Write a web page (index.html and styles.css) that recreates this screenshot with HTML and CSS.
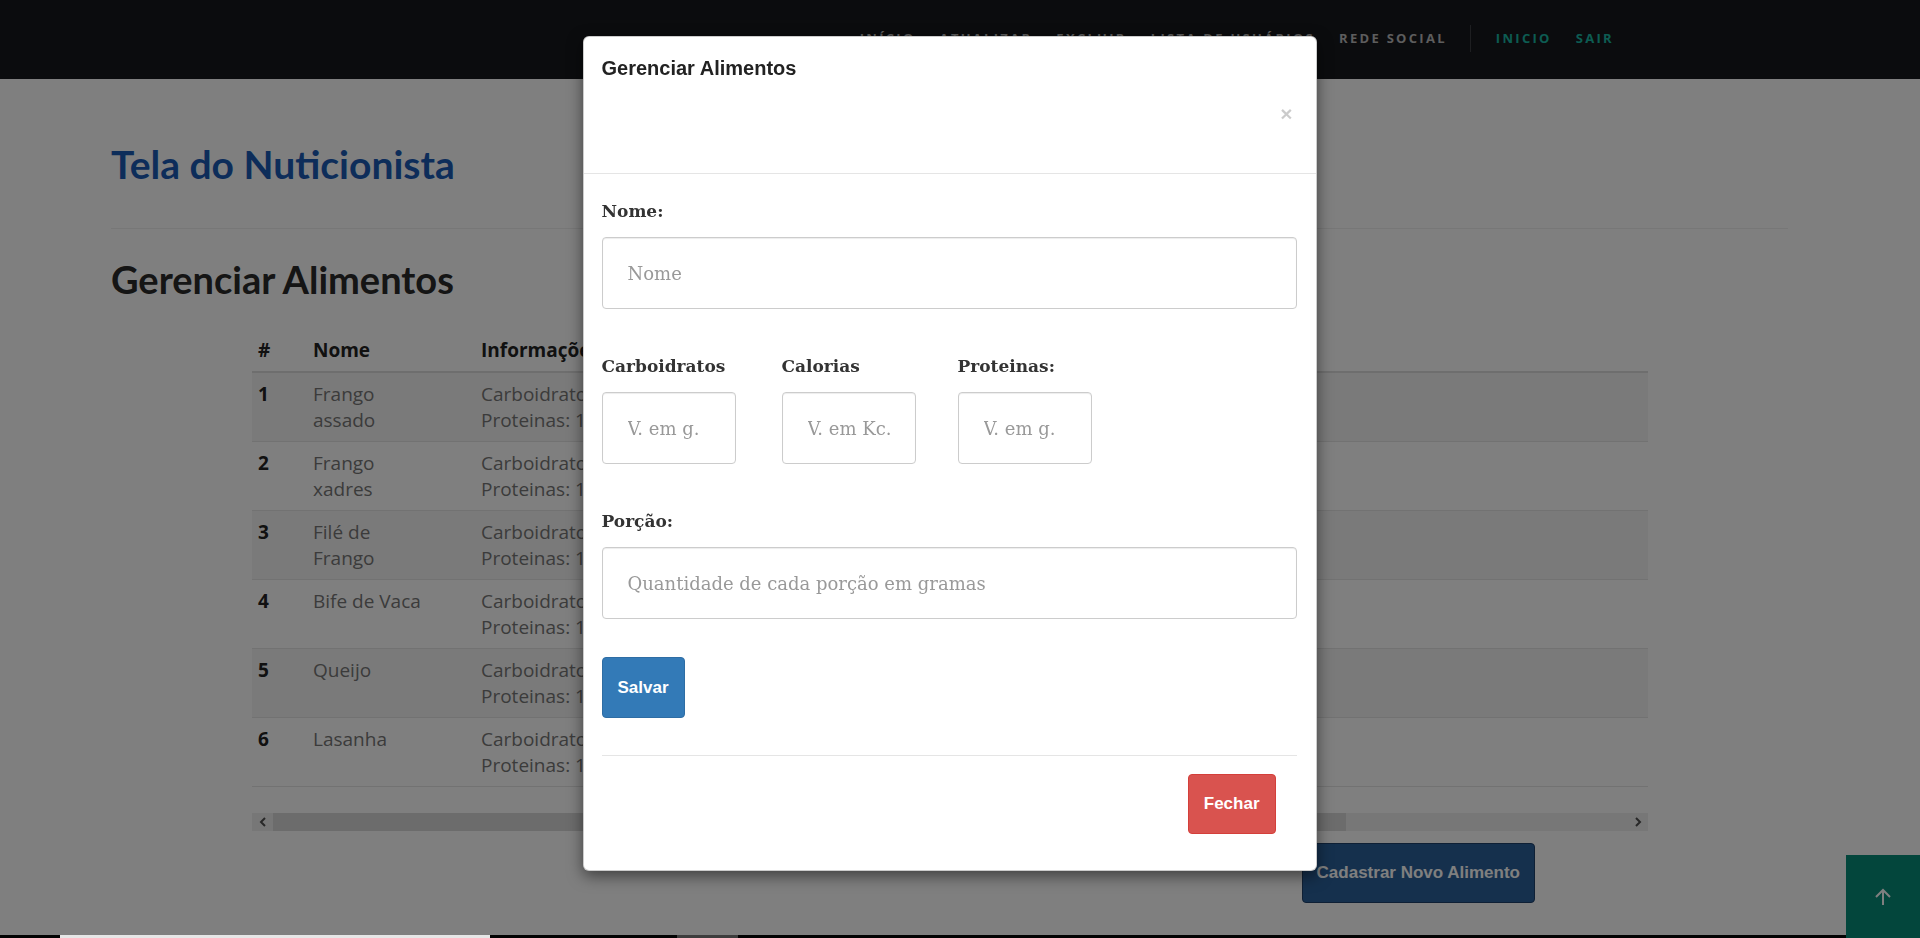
FILE: index.html
```html
<!DOCTYPE html>
<html lang="pt-BR">
<head>
<meta charset="utf-8">
<title>Tela do Nuticionista</title>
<link rel="stylesheet" href="styles.css">
</head>
<body>
<header class="navbar">
  <nav class="nav-links">
    <a class="nav-link">Início</a>
    <a class="nav-link">Atualizar</a>
    <a class="nav-link">Excluir</a>
    <a class="nav-link">Lista de Usuários</a>
    <a class="nav-link">Rede Social</a>
    <span class="nav-sep"></span>
    <a class="nav-link nav-link-accent">Inicio</a>
    <a class="nav-link nav-link-accent">Sair</a>
  </nav>
</header>

<main class="container">
  <h1 class="page-title">Tela do Nuticionista</h1>
  <hr class="page-rule">
  <h2 class="section-title">Gerenciar Alimentos</h2>

  <div class="table-area">
    <div class="table-wrap">
      <table class="food-table">
        <colgroup><col class="col-num"><col class="col-name"><col class="col-info"></colgroup>
        <thead>
          <tr><th>#</th><th>Nome</th><th>Informações Nutricionais</th></tr>
        </thead>
        <tbody>
          <tr><th class="row-num">1</th><td class="name">Frango assado</td><td class="info">Carboidratos: 0g, Calorias: 165Kc, Porção: 100g<br>Proteinas: 19g</td></tr>
          <tr><th class="row-num">2</th><td class="name">Frango xadres</td><td class="info">Carboidratos: 8g, Calorias: 190Kc, Porção: 100g<br>Proteinas: 17g</td></tr>
          <tr><th class="row-num">3</th><td class="name">Filé de Frango</td><td class="info">Carboidratos: 0g, Calorias: 159Kc, Porção: 100g<br>Proteinas: 14g</td></tr>
          <tr><th class="row-num">4</th><td class="name">Bife de Vaca</td><td class="info">Carboidratos: 0g, Calorias: 250Kc, Porção: 100g<br>Proteinas: 16g</td></tr>
          <tr><th class="row-num">5</th><td class="name">Queijo</td><td class="info">Carboidratos: 1g, Calorias: 350Kc, Porção: 100g<br>Proteinas: 12g</td></tr>
          <tr><th class="row-num">6</th><td class="name">Lasanha</td><td class="info">Carboidratos: 15g, Calorias: 135Kc, Porção: 100g<br>Proteinas: 1g</td></tr>
        </tbody>
      </table>
    </div>
    <div class="fake-scroll">
      <span class="scroll-btn"><svg width="8" height="10" viewBox="0 0 8 10"><polyline points="6,1 2,5 6,9" fill="none" stroke="#505050" stroke-width="2"/></svg></span>
      <span class="scroll-thumb"></span>
      <span class="scroll-track"></span>
      <span class="scroll-btn"><svg width="8" height="10" viewBox="0 0 8 10"><polyline points="2,1 6,5 2,9" fill="none" stroke="#505050" stroke-width="2"/></svg></span>
    </div>
  </div>

  <div class="actions">
    <button class="btn btn-navy" type="button">Cadastrar Novo Alimento</button>
  </div>
</main>

<footer class="site-footer">
  <div class="footer-strip">
    <span class="footer-light"></span>
    <span class="footer-gray"></span>
  </div>
</footer>

<a class="to-top" href="#">
  <svg width="18" height="18" viewBox="0 0 18 18"><path d="M9 17V2M2 9l7-7 7 7" fill="none" stroke="#fff" stroke-width="2"/></svg>
</a>

<div class="backdrop"></div>

<div class="modal">
  <div class="modal-dialog">
    <div class="modal-header">
      <h4 class="modal-title">Gerenciar Alimentos</h4>
      <button class="close" type="button">×</button>
    </div>
    <div class="modal-body">
      <div class="form-group">
        <label class="form-label">Nome:</label>
        <input class="form-control" type="text" placeholder="Nome">
      </div>
      <div class="form-group macro-row">
        <div class="macro">
          <label class="form-label">Carboidratos</label>
          <input class="form-control form-control-sm" type="text" placeholder="V. em g.">
        </div>
        <div class="macro">
          <label class="form-label">Calorias</label>
          <input class="form-control form-control-sm" type="text" placeholder="V. em Kc.">
        </div>
        <div class="macro">
          <label class="form-label">Proteinas:</label>
          <input class="form-control form-control-sm" type="text" placeholder="V. em g.">
        </div>
      </div>
      <div class="form-group form-group-last">
        <label class="form-label">Porção:</label>
        <input class="form-control" type="text" placeholder="Quantidade de cada porção em gramas">
      </div>
      <button class="btn btn-blue" type="button">Salvar</button>
      <hr class="modal-sep">
      <div class="modal-footer">
        <button class="btn btn-red" type="button">Fechar</button>
      </div>
    </div>
  </div>
</div>
</body>
</html>
```
FILE: styles.css
```css
* { box-sizing: border-box; }

html, body { margin: 0; }

body {
  padding-right: 21px;
  background: #fff;
  font-family: "Open Sans", sans-serif;
  color: #333;
  overflow: hidden;
}

/* ---------- navbar ---------- */
.navbar {
  height: 79px;
  margin-right: -21px;
  background: #17191d;
  display: flex;
  justify-content: flex-end;
  align-items: center;
  padding: 0 294px 3px 0;
}

.nav-links {
  display: flex;
  align-items: center;
}

.nav-link {
  padding: 0 12px;
  font-family: "Open Sans", sans-serif;
  font-weight: 700;
  font-size: 13px;
  line-height: 20px;
  letter-spacing: 2.3px;
  text-transform: uppercase;
  color: #bbb;
  text-decoration: none;
}

.nav-link-accent { color: #1ab8a4; }

.nav-sep {
  width: 1px;
  height: 27px;
  background: #3c3e42;
  margin: 0 13px 0 11px;
}

/* ---------- content ---------- */
.container {
  width: 1677px;
  margin: 0 auto;
  padding-top: 64px;
}

.page-title {
  margin: 0;
  font-family: Lato, sans-serif;
  font-weight: 700;
  font-size: 39px;
  line-height: 43px;
  color: #1b5bb5;
}

.page-rule {
  margin: 42px 0 29px;
  border: 0;
  border-top: 1px solid #eee;
}

.section-title {
  margin: 0;
  font-family: Lato, sans-serif;
  font-weight: 700;
  font-size: 38px;
  line-height: 42px;
  color: #2a2a2a;
}

.table-area {
  margin: 29px 140px 0 141px;
}

.table-wrap { overflow: hidden; }

.food-table {
  width: 100%;
  table-layout: fixed;
  border-collapse: collapse;
  margin-bottom: 26px;
  border-bottom: 1px solid #e4e4e4;
  font-size: 19px;
  line-height: 26px;
}

.col-num { width: 55px; }
.col-name { width: 168px; }

.food-table th,
.food-table td {
  padding: 8px 6px;
  text-align: left;
  vertical-align: top;
  white-space: nowrap;
}

.food-table thead th {
  vertical-align: bottom;
  font-weight: 700;
  color: #222;
  border-bottom: 2px solid #ddd;
}

.food-table tbody th,
.food-table tbody td { border-top: 1px solid #e4e4e4; }

.food-table tbody tr:nth-child(odd) { background: #f4f4f4; }

.food-table .row-num {
  font-weight: 700;
  color: #222;
}

.food-table .name {
  white-space: normal;
  padding-right: 42px;
  color: #777;
}

.food-table .info { color: #777; }

.fake-scroll {
  display: flex;
  height: 18px;
  background: #efefef;
}

.scroll-btn {
  width: 21px;
  display: flex;
  align-items: center;
  justify-content: center;
}

.scroll-thumb {
  width: 1073px;
  background: #d8d8d8;
}

.scroll-track { flex: 1; }

.actions {
  display: flex;
  justify-content: flex-end;
  padding-right: 253px;
  margin-top: 12px;
}

.btn {
  height: 60px;
  padding: 0 14px;
  border: 1px solid transparent;
  border-radius: 4px;
  font-family: "Liberation Sans", Arial, sans-serif;
  font-weight: 700;
  font-size: 17px;
  color: #fff;
  cursor: pointer;
}

.btn-navy {
  background: #2a609a;
  border-color: #1e406a;
}

.btn-blue {
  height: 61px;
  padding: 0 15px;
  background: #337ab7;
  border-color: #2e6da4;
}

.btn-red {
  padding: 0 15px;
  background: #d9534f;
  border-color: #d43f3a;
}

/* ---------- footer ---------- */
.site-footer {
  margin-top: 32px;
  height: 200px;
  background: #050505;
  margin-right: -21px;
}

.footer-strip {
  display: flex;
  height: 40px;
}

.footer-light {
  margin-left: 60px;
  width: 430px;
  background: #e6e6e6;
  position: relative;
  z-index: 1045;
}

.footer-gray {
  margin-left: 187px;
  width: 61px;
  background: #7a7a7a;
}

.to-top {
  position: fixed;
  right: 0;
  bottom: 0;
  width: 74px;
  height: 83px;
  background: #078c79;
  display: flex;
  align-items: center;
  justify-content: center;
  z-index: 1000;
}

/* ---------- modal ---------- */
.backdrop {
  position: fixed;
  inset: 0;
  background: rgba(0, 0, 0, 0.5);
  z-index: 1040;
}

.modal {
  position: fixed;
  inset: 0;
  padding-right: 21px;
  z-index: 1050;
}

.modal-dialog {
  width: 734px;
  margin: 36px auto 0;
  background: #fff;
  border: 1px solid rgba(0, 0, 0, 0.2);
  border-radius: 6px;
  box-shadow: 0 5px 15px rgba(0, 0, 0, 0.5);
}

.modal-header {
  padding: 20px 19px 49px 18px;
  border-bottom: 1px solid #e5e5e5;
}

.modal-title {
  margin: 0;
  font-family: "Liberation Sans", Arial, sans-serif;
  font-weight: 700;
  font-size: 20px;
  line-height: 23px;
  color: #222;
}

.close {
  display: block;
  margin: 23px 4px 0 auto;
  padding: 0;
  border: 0;
  background: none;
  font-family: "Liberation Sans", Arial, sans-serif;
  font-weight: 700;
  font-size: 21px;
  line-height: 21px;
  color: #000;
  opacity: 0.2;
}

.modal-body {
  padding: 25px 19px 36px 18px;
}

.form-group { margin-bottom: 45px; }
.form-group-last { margin-bottom: 38px; }

.form-label {
  display: block;
  margin-bottom: 14px;
  font-family: "DejaVu Serif", serif;
  font-weight: 700;
  font-size: 17px;
  line-height: 24px;
  color: #333;
}

.form-control {
  display: block;
  width: 100%;
  height: 72px;
  padding: 0 25px;
  border: 1px solid #ccc;
  border-radius: 4px;
  box-shadow: inset 0 1px 1px rgba(0, 0, 0, 0.075);
  font-family: "DejaVu Serif", serif;
  font-size: 18px;
  color: #555;
  background: #fff;
}

.form-control::placeholder { color: #999; }

.macro-row {
  display: grid;
  grid-template-columns: 180px 176px 134px;
}

.form-control-sm { width: 134px; }

.modal-sep {
  margin: 37px 0 18px;
  border: 0;
  border-top: 1px solid #e5e5e5;
}

.modal-footer {
  display: flex;
  justify-content: flex-end;
  padding-right: 21px;
}
```
